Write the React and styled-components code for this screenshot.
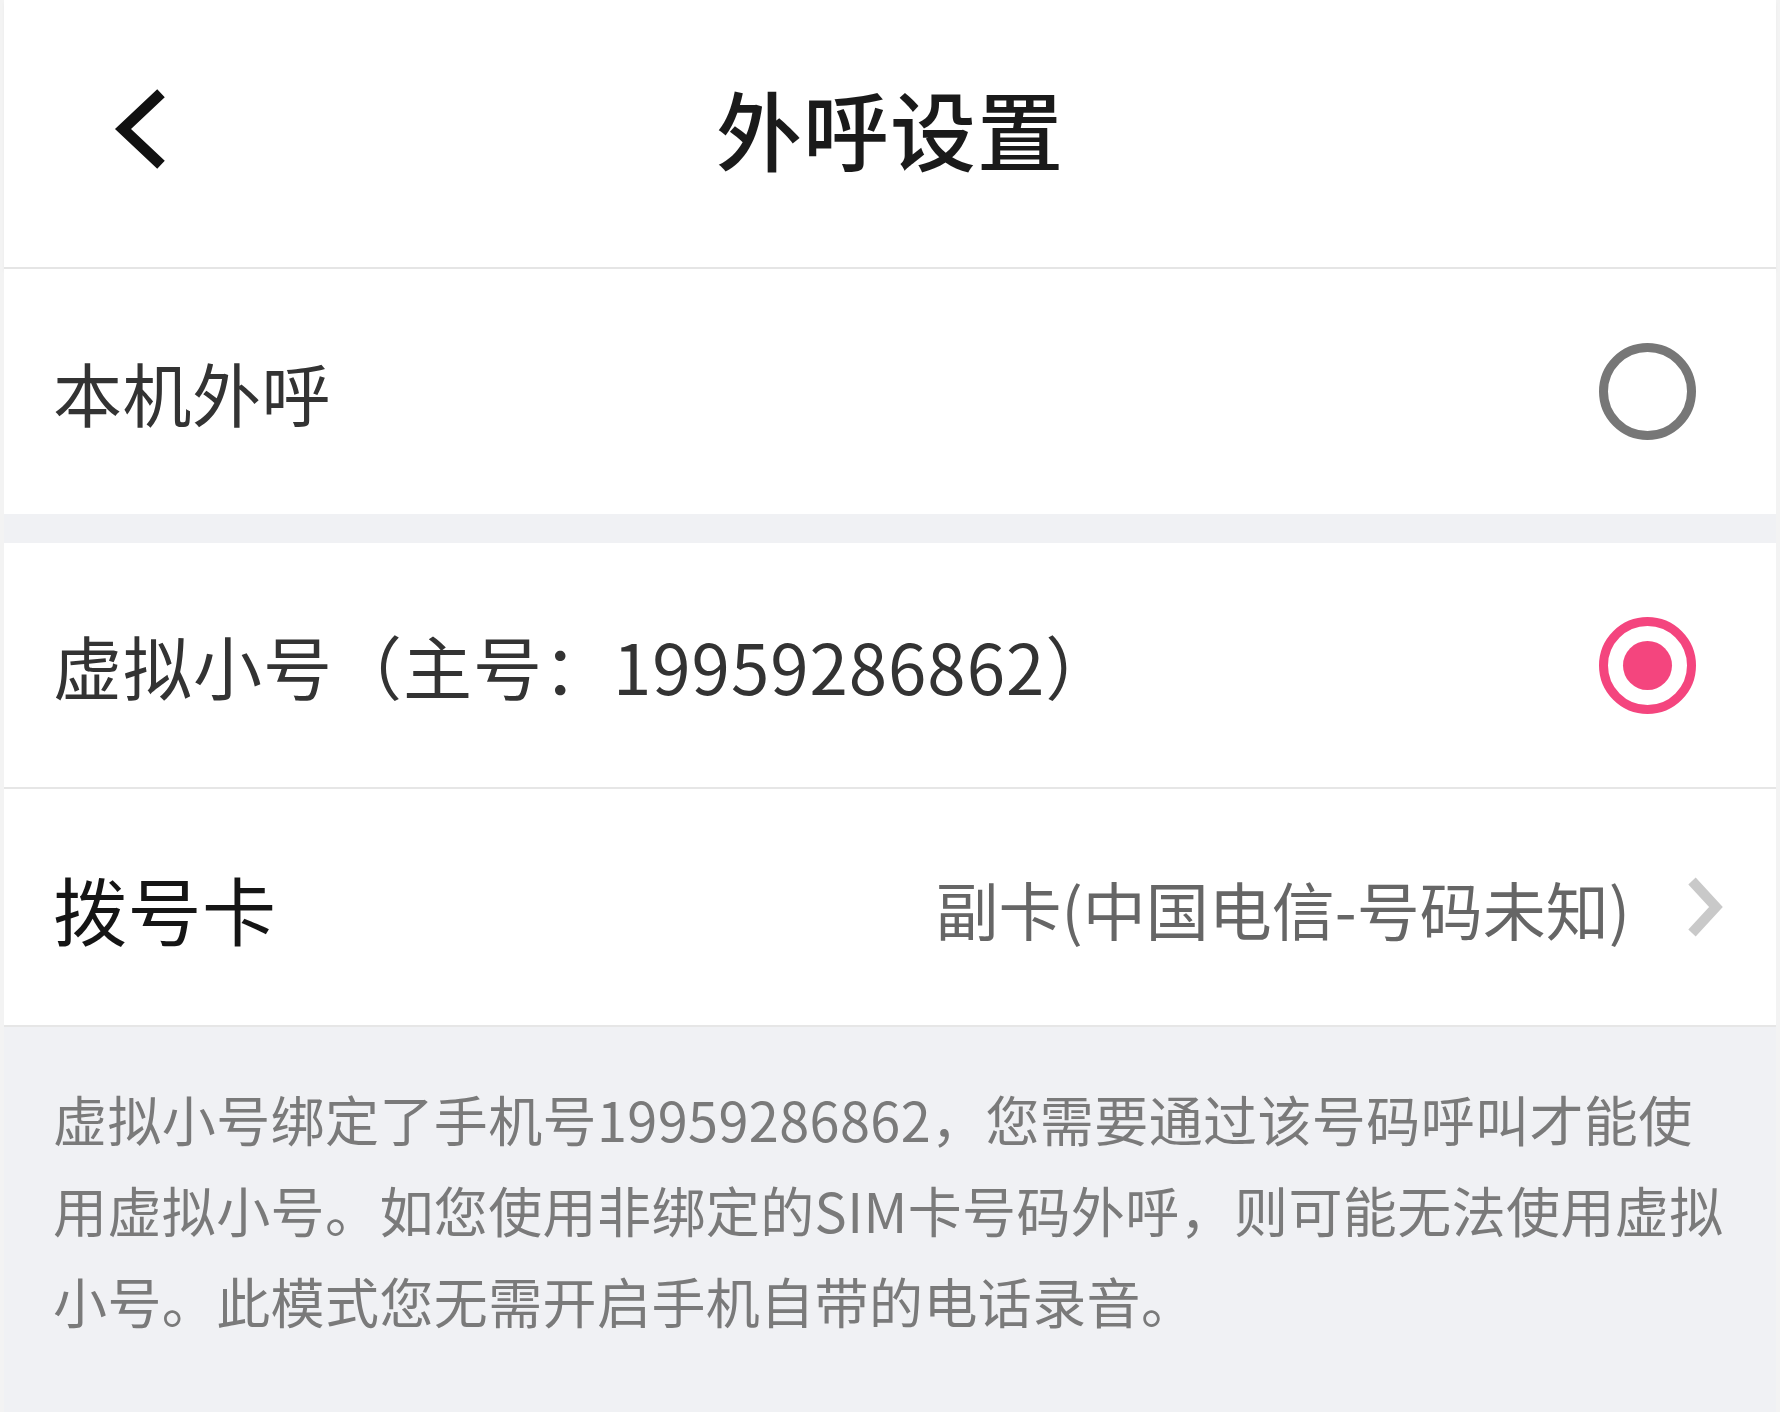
import React from 'react'
import styled, { createGlobalStyle } from 'styled-components'

export default function App() {
    return (
        <>
            <GlobalStyle />
            <Page>
                <Header>
                    <BackButton aria-label="back">
                        <svg width="60" height="80" viewBox="0 0 60 80">
                            <polyline points="46,8 12,40 46,72" fill="none" stroke="#111" strokeWidth="11" strokeLinecap="square" />
                        </svg>
                    </BackButton>
                    <Title>外呼设置</Title>
                    <span />
                </Header>

                <Section>
                    <Row height={245}>
                        <Label>本机外呼</Label>
                        <Radio />
                    </Row>
                </Section>

                <Section gap>
                    <Row height={246} divider>
                        <Label wide>虚拟小号（主号：19959286862）</Label>
                        <Radio checked />
                    </Row>
                    <Row height={238} divider>
                        <Label strong>拨号卡</Label>
                        <Value>
                            副卡(中国电信-号码未知)
                            <svg width="44" height="64" viewBox="0 0 44 64">
                                <polyline points="10,6 34,32 10,58" fill="none" stroke="#c9c9c9" strokeWidth="10" />
                            </svg>
                        </Value>
                    </Row>
                </Section>

                <Note>
                    虚拟小号绑定了手机号19959286862，您需要通过该号码呼叫才能使用虚拟小号。如您使用非绑定的SIM卡号码外呼，则可能无法使用虚拟小号。此模式您无需开启手机自带的电话录音。
                </Note>
            </Page>
        </>
    )
}

const GlobalStyle = createGlobalStyle`
    html, body {
        margin: 0;
        background: #f3f3f3;
    }
    body {
        font-family: "Noto Sans CJK SC", "Noto Sans", sans-serif;
    }
`;

const Page = styled.div`
    margin: 0 4px;
    min-height: 1412px;
    background-color: #f0f1f4;
`;

const Header = styled.header`
    display: grid;
    grid-template-columns: 1fr auto 1fr;
    align-items: center;
    height: 267px;
    background-color: white;
    border-bottom: 2px solid #e5e5e5;
    box-shadow: 0 3px 4px rgba(0, 0, 0, 0.03);
`;

const BackButton = styled.button`
    justify-self: start;
    display: flex;
    margin-left: 107px;
    margin-top: -10px;
    padding: 0;
    border: none;
    background: none;
`;

const Title = styled.h1`
    margin: 0;
    margin-top: -12px;
    font-size: 86px;
    font-weight: 500;
    color: #1a1a1a;
    letter-spacing: 1px;
`;

const Section = styled.section`
    margin-top: ${props => props.gap ? '29px' : '0'};
    background-color: white;
`;

const Row = styled.div`
    display: flex;
    justify-content: space-between;
    align-items: center;
    height: ${props => props.height}px;
    box-sizing: border-box;
    padding: 0 50px 0 49px;
    border-bottom: ${props => props.divider ? '2px solid #e6e6e6' : 'none'};
`;

const Label = styled.span`
    font-size: ${props => props.strong ? '74px' : '69px'};
    letter-spacing: ${props => props.wide ? '1px' : '0.5px'};
    color: ${props => props.strong ? '#151515' : '#333'};
`;

const Radio = styled.span`
    width: 97px;
    height: 97px;
    margin-right: 30px;
    box-sizing: border-box;
    border-radius: 50%;
    border: 9px solid ${props => props.checked ? '#f4457e' : '#777'};
    display: flex;
    align-items: center;
    justify-content: center;

    &::after {
        content: '';
        display: ${props => props.checked ? 'block' : 'none'};
        width: 49px;
        height: 49px;
        border-radius: 50%;
        background-color: #f4457e;
    }
`;

const Value = styled.span`
    display: flex;
    align-items: center;
    gap: 52px;
    font-size: 63px;
    color: #666;
`;

const Note = styled.p`
    margin: 0;
    padding: 46px 36px 0 49px;
    font-size: 54px;
    line-height: 91px;
    letter-spacing: 0.4px;
    color: #7a7a7a;
`;
